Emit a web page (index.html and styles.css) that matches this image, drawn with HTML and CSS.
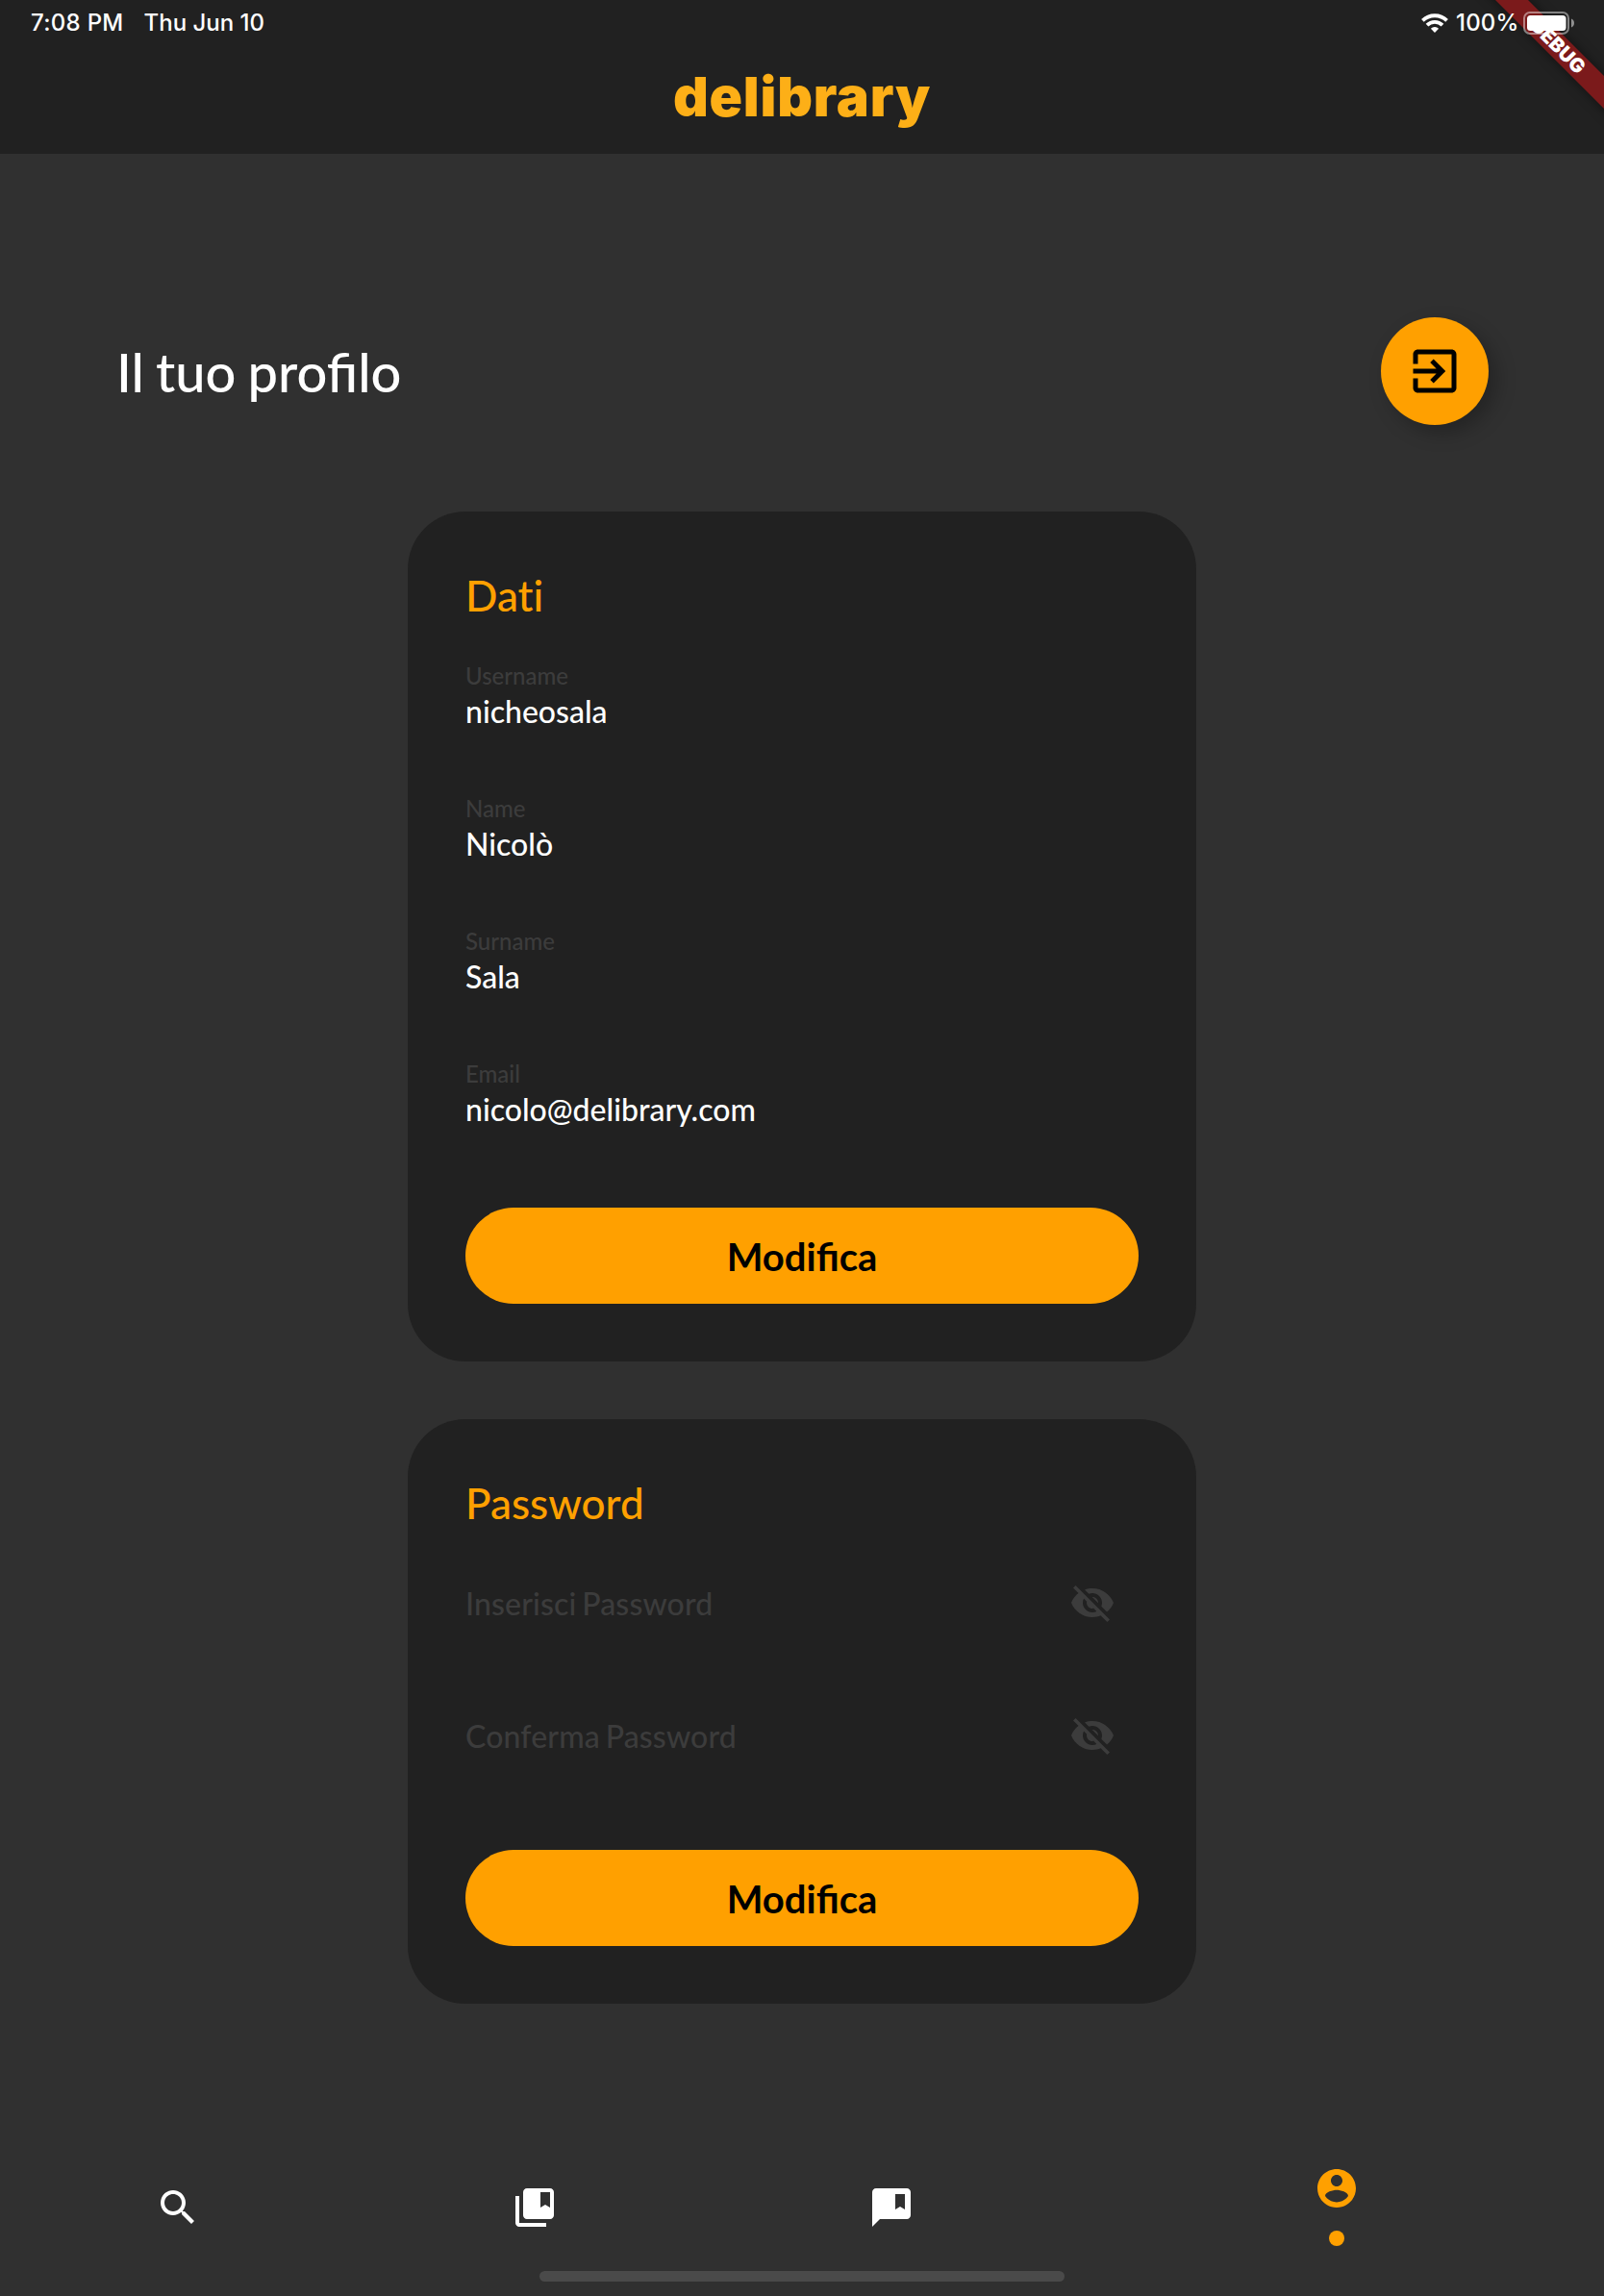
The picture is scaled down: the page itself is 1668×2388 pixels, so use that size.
FILE: index.html
```html
<!DOCTYPE html>
<html lang="it">
<head>
<meta charset="utf-8">
<title>delibrary</title>
<link rel="stylesheet" href="styles.css">
</head>
<body>
<header class="app-bar">
  <div class="status-bar">
    <div class="status-left"><span class="status-time">7:08 PM</span><span class="status-date">Thu Jun 10</span></div>
    <div class="status-right">
      <svg class="wifi" viewBox="0 0 28 20"><g fill="none" stroke="#fff" stroke-width="3.8"><path d="M1.4 7.4a18 18 0 0 1 25.2 0"/><path d="M6 12.2a11.4 11.4 0 0 1 16 0"/></g><path fill="#fff" d="M14 20l-4.1-4.2a5.8 5.8 0 0 1 8.2 0z"/></svg>
      <span class="status-percent">100%</span>
      <svg class="battery" viewBox="0 0 54 24"><rect x="1" y="1" width="46" height="22" rx="6" fill="none" stroke="#fff" stroke-opacity=".45" stroke-width="2"/><rect x="4" y="4" width="40.5" height="16" rx="3.5" fill="#fff"/><path d="M50 7.5c2 .7 3 2.5 3 4.5s-1 3.800-3 4.500z" fill="#fff" fill-opacity=".5"/></svg>
    </div>
  </div>
  <div class="brand"><span class="logo">delibrary</span></div>
  <div class="debug-corner"><div class="debug-banner">DEBUG</div></div>
</header>

<main class="content">
  <div class="title-row">
    <h1 class="page-title">Il tuo profilo</h1>
    <button class="logout" aria-label="Esci">
      <svg viewBox="0 0 24 24"><path d="M10.090 15.590L11.500 17l5-5-5-5-1.410 1.410L12.670 11H3v2h9.670l-2.580 2.590zM19 3H5c-1.110 0-2 .9-2 2v4h2V5h14v14H5v-4H3v4c0 1.100.890 2 2 2h14c1.100 0 2-.9 2-2V5c0-1.100-.9-2-2-2z"/></svg>
    </button>
  </div>

  <section class="card">
    <h2 class="card-title">Dati</h2>
    <div class="fields">
      <div class="field"><span class="label">Username</span><span class="value">nicheosala</span></div>
      <div class="field"><span class="label">Name</span><span class="value">Nicolò</span></div>
      <div class="field"><span class="label">Surname</span><span class="value">Sala</span></div>
      <div class="field"><span class="label">Email</span><span class="value">nicolo@delibrary.com</span></div>
    </div>
    <button class="submit">Modifica</button>
  </section>

  <section class="card">
    <h2 class="card-title">Password</h2>
    <div class="fields">
      <div class="secret"><span class="hint">Inserisci Password</span>
        <svg class="eye" viewBox="0 0 24 24"><use href="#eye-off"/></svg></div>
      <div class="secret"><span class="hint">Conferma Password</span>
        <svg class="eye" viewBox="0 0 24 24"><use href="#eye-off"/></svg></div>
    </div>
    <button class="submit">Modifica</button>
  </section>
</main>

<footer class="bottom">
  <nav class="tabs">
    <div class="tab"><svg viewBox="0 0 24 24"><path d="M15.500 14h-.79l-.28-.27C15.410 12.590 16 11.110 16 9.500 16 5.910 13.090 3 9.500 3S3 5.910 3 9.500 5.910 16 9.500 16c1.610 0 3.090-.59 4.230-1.570l.27.28v.79l5 4.990L20.490 19l-4.990-5zm-6 0C7.010 14 5 11.990 5 9.500S7.010 5 9.500 5 14 7.010 14 9.500 11.990 14 9.500 14z"/></svg></div>
    <div class="tab"><svg viewBox="0 0 24 24"><path d="M4 6H2v14c0 1.100.9 2 2 2h14v-2H4V6z"/><path d="M20 2H8c-1.100 0-2 .9-2 2v12c0 1.100.9 2 2 2h12c1.100 0 2-.9 2-2V4c0-1.100-.9-2-2-2zm0 10l-2.500-1.500L15 12V4h5v8z"/></svg></div>
    <div class="tab"><svg viewBox="0 0 24 24"><path d="M20 2H4c-1.100 0-1.990.9-1.990 2L2 22l4-4h14c1.100 0 2-.9 2-2V4c0-1.100-.9-2-2-2zm-1 11l-2.500-1.500L14 13V5h5v8z"/></svg></div>
    <div class="tab active"><svg viewBox="0 0 24 24"><path d="M12 2C6.480 2 2 6.480 2 12s4.480 10 10 10 10-4.480 10-10S17.520 2 12 2zm0 3c1.660 0 3 1.340 3 3s-1.340 3-3 3-3-1.340-3-3 1.340-3 3-3zm0 14.200c-2.500 0-4.710-1.280-6-3.220.03-1.990 4-3.080 6-3.080 1.990 0 5.970 1.090 6 3.080-1.290 1.940-3.500 3.220-6 3.220z"/></svg><span class="dot"></span></div>
  </nav>
  <div class="home-indicator"></div>
</footer>

<svg class="symbols" width="0" height="0"><symbol id="eye-off" viewBox="0 0 24 24"><path d="M12 7c2.760 0 5 2.240 5 5 0 .65-.13 1.260-.36 1.830l2.920 2.920c1.510-1.260 2.700-2.890 3.430-4.750-1.730-4.390-6-7.500-11-7.500-1.400 0-2.740.25-3.980.7l2.160 2.160C10.740 7.130 11.350 7 12 7zM2 4.270l2.280 2.280.46.46C3.080 8.300 1.780 10.020 1 12c1.730 4.390 6 7.500 11 7.500 1.550 0 3.030-.3 4.380-.84l.42.42L19.730 22 21 20.730 3.270 3 2 4.270zM7.530 9.800l1.550 1.550c-.05.21-.08.43-.08.65 0 1.660 1.340 3 3 3 .22 0 .44-.03.65-.08l1.550 1.550c-.67.33-1.410.53-2.200.53-2.760 0-5-2.240-5-5 0-.79.2-1.530.53-2.200zm4.310-.78l3.150 3.150.02-.16c0-1.660-1.340-3-3-3l-.17.01z"/></symbol></svg>
</body>
</html>
```
FILE: styles.css
```css
* { box-sizing: border-box; }

body {
  margin: 0;
  width: 1668px;
  height: 2388px;
  display: flex;
  flex-direction: column;
  background: #303030;
  color: #fff;
  font-family: Lato, sans-serif;
  font-weight: 500;
  overflow: hidden;
}

h1, h2 { margin: 0; font-weight: 500; }

button {
  border: 0;
  padding: 0;
  font-family: inherit;
  background: #ffa000;
  color: #000;
}

svg { display: block; fill: currentColor; }

.symbols { position: absolute; }

/* App bar */
.app-bar {
  position: relative;
  height: 160px;
  background: #212121;
}

.status-bar {
  position: relative;
  z-index: 2;
  height: 48px;
  padding: 0 30px 0 32px;
  display: flex;
  justify-content: space-between;
  align-items: center;
  font: 500 24px/48px Inter, sans-serif;
}

.status-left { display: flex; gap: 21px; }
.status-time { letter-spacing: 0.3px; }
.status-right { display: flex; align-items: center; }
.wifi { width: 28px; height: 20px; margin-right: 8px; }
.status-percent { width: 70px; letter-spacing: 0.2px; }
.battery { width: 54px; height: 24px; }

.brand {
  height: 112px;
  display: flex;
  justify-content: center;
}

.logo {
  color: #fdaf17;
  font-family: Inter, sans-serif;
  font-size: 57px;
  font-weight: 900;
  line-height: 69px;
  padding-top: 18px;
  letter-spacing: 0.8px;
}

/* Debug ribbon across the top right corner */
.debug-corner {
  position: absolute;
  top: 0;
  right: 0;
  width: 160px;
  height: 160px;
  overflow: hidden;
}

.debug-banner {
  position: absolute;
  left: 12px;
  top: 36px;
  width: 200px;
  height: 24px;
  transform: rotate(45deg);
  background: #7b1a1b;
  box-shadow: 0 0 12px rgba(0, 0, 0, 0.5);
  text-align: center;
  font: 900 20.4px/24px Inter, sans-serif;
}

/* Content */
.content {
  padding-top: 170px;
  display: flex;
  flex-direction: column;
  align-items: center;
}

.title-row {
  width: 1428px;
  height: 112px;
  margin-bottom: 90px;
  display: flex;
  align-items: center;
  justify-content: space-between;
}

.page-title {
  padding-left: 1px;
  font-size: 56px;
  line-height: 67px;
  word-spacing: -2px;
}

.logout {
  width: 112px;
  height: 112px;
  border-radius: 50%;
  display: flex;
  align-items: center;
  justify-content: center;
  box-shadow: 8px 8px 20px rgba(0, 0, 0, 0.26);
}

.logout svg { width: 60px; height: 60px; }

.card {
  width: 820px;
  margin-bottom: 60px;
  padding: 60px;
  border-radius: 60px;
  background: #212121;
}

.card-title {
  color: #ffa000;
  font-size: 44px;
  line-height: 53px;
  padding-top: 1px;
  margin-bottom: 42px;
  font-variant-ligatures: none;
}

.fields { margin-bottom: 16px; }

.field {
  height: 138px;
  display: flex;
  flex-direction: column;
  gap: 4px;
}

.label { color: #3c3c3c; font-size: 24px; line-height: 29px; }
.value { font-size: 32px; line-height: 38px; }

.secret {
  height: 138px;
  padding: 11px 24px 0 0;
  display: flex;
  justify-content: space-between;
  color: #3c3c3c;
}

.hint {
  font-size: 32px;
  line-height: 38px;
  padding-top: 6px;
  letter-spacing: 0.15px;
  word-spacing: -2.5px;
}

.eye { width: 48px; height: 48px; }

.submit {
  display: block;
  width: 100%;
  height: 100px;
  padding-top: 2px;
  border-radius: 50px;
  font-size: 40px;
  font-weight: 700;
  line-height: 48px;
}

/* Bottom navigation */
.bottom {
  margin-top: auto;
  display: flex;
  flex-direction: column;
  align-items: center;
  padding-bottom: 15px;
}

.tabs {
  width: 100%;
  height: 132px;
  display: grid;
  grid-template-columns: 2fr 2fr 2fr 3fr;
}

.tab {
  display: flex;
  flex-direction: column;
  align-items: center;
  padding-top: 42px;
}

.tab svg { width: 48px; height: 48px; }
.tab.active { padding-top: 22px; gap: 20px; color: #ffa000; }
.dot { width: 16px; height: 16px; border-radius: 50%; background: #ffa000; }

.home-indicator {
  width: 546px;
  height: 11px;
  border-radius: 6px;
  background: #4a4a4a;
}
```
